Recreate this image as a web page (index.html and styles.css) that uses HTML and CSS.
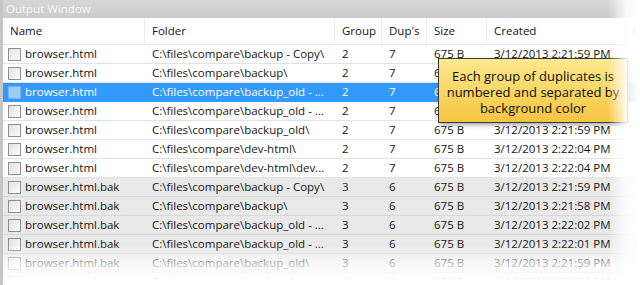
FILE: index.html
```html
<!DOCTYPE html>
<html>
<head>
<meta charset="utf-8">
<link rel="stylesheet" href="styles.css">
</head>
<body>
<div class="window">
  <div class="titlebar">Output Window</div>
  <div class="grid">
    <div class="head">
      <div class="hc">Name</div>
      <div class="hc">Folder</div>
      <div class="hc">Group</div>
      <div class="hc">Dup's</div>
      <div class="hc">Size</div>
      <div class="hc">Created</div>
      <div class="hc">M</div>
    </div>
    <div class="row g2"><div class="c name"><span class="cb"></span>browser.html</div><div class="c">C:\files\compare\backup - Copy\</div><div class="c">2</div><div class="c">7</div><div class="c">675 B</div><div class="c">3/12/2013 2:21:59 PM</div><div class="c">1</div></div>
    <div class="row g2"><div class="c name"><span class="cb"></span>browser.html</div><div class="c">C:\files\compare\backup\</div><div class="c">2</div><div class="c">7</div><div class="c">675 B</div><div class="c">3/12/2013 2:21:59 PM</div><div class="c">1</div></div>
    <div class="row sel"><div class="c name"><span class="cb"></span>browser.html</div><div class="c">C:\files\compare\backup_old - ...</div><div class="c">2</div><div class="c">7</div><div class="c">675 B</div><div class="c">3/12/2013 2:21:59 PM</div><div class="c">1</div></div>
    <div class="row g2"><div class="c name"><span class="cb"></span>browser.html</div><div class="c">C:\files\compare\backup_old - ...</div><div class="c">2</div><div class="c">7</div><div class="c">675 B</div><div class="c">3/12/2013 2:21:59 PM</div><div class="c">1</div></div>
    <div class="row g2"><div class="c name"><span class="cb"></span>browser.html</div><div class="c">C:\files\compare\backup_old\</div><div class="c">2</div><div class="c">7</div><div class="c">675 B</div><div class="c">3/12/2013 2:21:59 PM</div><div class="c">1</div></div>
    <div class="row g2"><div class="c name"><span class="cb"></span>browser.html</div><div class="c">C:\files\compare\dev-html\</div><div class="c">2</div><div class="c">7</div><div class="c">675 B</div><div class="c">3/12/2013 2:22:04 PM</div><div class="c">1</div></div>
    <div class="row g2"><div class="c name"><span class="cb"></span>browser.html</div><div class="c">C:\files\compare\dev-html\dev...</div><div class="c">2</div><div class="c">7</div><div class="c">675 B</div><div class="c">3/12/2013 2:22:04 PM</div><div class="c">1</div></div>
    <div class="row g3"><div class="c name"><span class="cb"></span>browser.html.bak</div><div class="c">C:\files\compare\backup - Copy\</div><div class="c">3</div><div class="c">6</div><div class="c">675 B</div><div class="c">3/12/2013 2:21:59 PM</div><div class="c">1</div></div>
    <div class="row g3"><div class="c name"><span class="cb"></span>browser.html.bak</div><div class="c">C:\files\compare\backup\</div><div class="c">3</div><div class="c">6</div><div class="c">675 B</div><div class="c">3/12/2013 2:21:58 PM</div><div class="c">1</div></div>
    <div class="row g3"><div class="c name"><span class="cb"></span>browser.html.bak</div><div class="c">C:\files\compare\backup_old - ...</div><div class="c">3</div><div class="c">6</div><div class="c">675 B</div><div class="c">3/12/2013 2:22:02 PM</div><div class="c">1</div></div>
    <div class="row g3"><div class="c name"><span class="cb"></span>browser.html.bak</div><div class="c">C:\files\compare\backup_old - ...</div><div class="c">3</div><div class="c">6</div><div class="c">675 B</div><div class="c">3/12/2013 2:22:01 PM</div><div class="c">1</div></div>
    <div class="row g3"><div class="c name"><span class="cb"></span>browser.html.bak</div><div class="c">C:\files\compare\backup_old\</div><div class="c">3</div><div class="c">6</div><div class="c">675 B</div><div class="c">3/12/2013 2:21:59 PM</div><div class="c">1</div></div>
    <div class="row g3"><div class="c name"><span class="cb"></span>browser.html.bak</div><div class="c">C:\files\compare\dev-html\</div><div class="c">3</div><div class="c">6</div><div class="c">675 B</div><div class="c">3/12/2013 2:22:04 PM</div><div class="c">1</div></div>
  </div>
  <div class="tooltip">Each group of duplicates is numbered and separated by background color</div>
  <div class="fade-right"></div>
  <div class="fade-bottom"></div>
</div>
</body>
</html>
```
FILE: styles.css
```css
html, body {
  margin: 0;
  padding: 0;
  background: #fff;
  overflow: hidden;
}
body {
  width: 640px;
  height: 285px;
  font-family: "Open Sans", "Noto Sans", sans-serif;
  font-size: 11.5px;
  color: #161616;
}
.window {
  position: relative;
  width: 640px;
  height: 285px;
  border-left: 3px solid #c6c6c6;
  box-sizing: border-box;
  overflow: hidden;
}
.titlebar {
  height: 18px;
  background: linear-gradient(#d6d6d6, #cccccc);
  color: #f8f8f8;
  padding-left: 3px;
  line-height: 17px;
  font-size: 11.5px;
}
.grid {
  display: flex;
  flex-direction: column;
}
.head, .row {
  display: grid;
  grid-template-columns: 142px 190px 47px 45px 60px 138px 1fr;
}
.head {
  height: 26px;
  border-bottom: 1px solid #e3e3e3;
  background: #fff;
}
.hc {
  padding-left: 7px;
  line-height: 26px;
  border-right: 1px solid #ececec;
  white-space: nowrap;
  overflow: hidden;
}
.row {
  height: 18px;
  border-bottom: 1px solid #e2e2e2;
  line-height: 18px;
}
.g2 { background: #fff; }
.g3 { background: #e9e9e9; border-bottom-color: #d7d7d7; }
.sel { background: #3399ff; color: #fff; border-bottom-color: #3399ff; }
.c {
  padding-left: 7px;
  white-space: nowrap;
  overflow: hidden;
}
.c:last-child { color: #bbb; }
.sel .c:last-child { color: #cfe5ff; }
.name {
  display: flex;
  align-items: center;
  gap: 4px;
  padding-left: 5px;
}
.cb {
  width: 11px;
  height: 11px;
  border: 1px solid #8e8f8f;
  background: linear-gradient(135deg, #e2e2e2, #fbfbfb);
  flex: none;
}
.sel .cb {
  background: #9fcbf7;
  border-color: #7ab2ec;
}
.tooltip {
  position: absolute;
  left: 435px;
  top: 58px;
  width: 190px;
  height: 65px;
  box-sizing: border-box;
  border: 1px solid #3a3a3a;
  background: linear-gradient(#fde98f, #f6c540);
  box-shadow: 2px 2px 4px rgba(0,0,0,0.35);
  color: #0d0d0d;
  font-size: 13px;
  font-weight: 400;
  line-height: 16px;
  text-align: center;
  padding: 9px 2px 0;
}
.fade-right {
  position: absolute;
  top: 0;
  right: 0;
  width: 32px;
  height: 100%;
  background: linear-gradient(to right, rgba(255,255,255,0), rgba(255,255,255,0.85) 55%, #fff);
}
.fade-bottom {
  position: absolute;
  left: -3px;
  right: 0;
  bottom: 0;
  height: 40px;
  background: linear-gradient(rgba(255,255,255,0), rgba(255,255,255,0.7) 50%, #fff 90%);
}
```
